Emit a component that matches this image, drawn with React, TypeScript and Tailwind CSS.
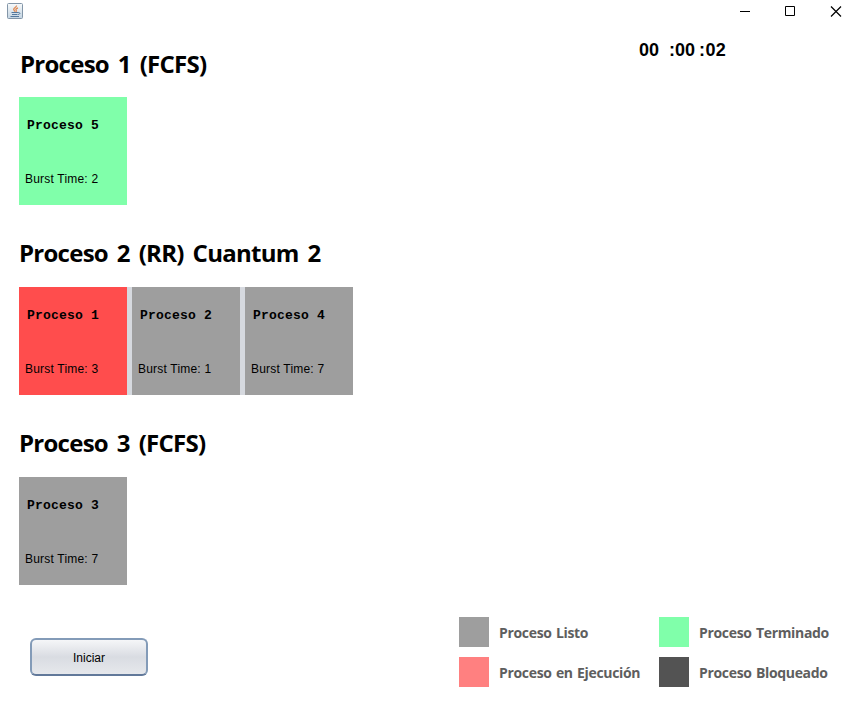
type Estado = "listo" | "terminado" | "ejecucion";

interface Proceso {
  id: number;
  burst: number;
  estado: Estado;
}

interface Cola {
  titulo: string;
  margen: string;
  procesos: Proceso[];
}

const colas: Cola[] = [
  { titulo: "Proceso 1 (FCFS)", margen: "pl-px leading-[34px]", procesos: [{ id: 5, burst: 2, estado: "terminado" }] },
  {
    titulo: "Proceso 2 (RR) Cuantum 2",
    margen: "leading-[32px]",
    procesos: [
      { id: 1, burst: 3, estado: "ejecucion" },
      { id: 2, burst: 1, estado: "listo" },
      { id: 4, burst: 7, estado: "listo" },
    ],
  },
  { titulo: "Proceso 3 (FCFS)", margen: "leading-[32px]", procesos: [{ id: 3, burst: 7, estado: "listo" }] },
];

const fondo: Record<Estado, string> = {
  listo: "bg-[#9e9e9e]",
  terminado: "bg-[#80ffaa]",
  ejecucion: "bg-[#ff4d4d]",
};

const leyenda = [
  { texto: "Proceso Listo", color: "bg-[#9e9e9e]" },
  { texto: "Proceso Terminado", color: "bg-[#80ffaa]" },
  { texto: "Proceso en Ejecución", color: "bg-[#ff8080]" },
  { texto: "Proceso Bloqueado", color: "bg-[#535353]" },
];

function JavaIcon() {
  return (
    <svg width="16" height="16" viewBox="0 0 16 16" fill="none">
      <defs>
        <linearGradient id="java" x1="0" y1="0" x2="0" y2="1">
          <stop offset="0" stopColor="#f8fafb" />
          <stop offset="1" stopColor="#c3d4e2" />
        </linearGradient>
      </defs>
      <rect x="0.5" y="0.5" width="15" height="15" rx="1" fill="url(#java)" stroke="#8396a8" />
      <path d="M9.500 2.500c.3 1.500-2.800 2.200-2.800 3.800 0 .9 1 1.400 1.100 2.500M11 5c-1.700.4-2.600 1.300-1.800 2.300.4.500.1 1-.3 1.500" stroke="#e08a54" strokeWidth="1.300" />
      <path d="M4.500 9.500h6.500M5 11.500h5.500M3.500 13.500h8.500M11 9.500c2.500-.2 2.500 1.800 0 2" stroke="#54789d" strokeWidth="1" />
    </svg>
  );
}

function TitleBar() {
  return (
    <header className="flex h-[22px] items-start justify-between pl-[7px]">
      <div className="pt-[3px]"><JavaIcon /></div>
      <div className="flex gap-[34px] pt-1.5 pr-[18px]">
        <svg width="11" height="11" viewBox="0 0 11 11"><path d="M0 5.500h10" stroke="#000" /></svg>
        <svg width="11" height="11" viewBox="0 0 11 11"><path d="M.5.500h9v9h-9z" fill="none" stroke="#000" /></svg>
        <svg width="11" height="11" viewBox="0 0 11 11" className="overflow-visible"><path d="M1 .500l10 10M11 .500l-10 10" stroke="#000" strokeWidth="1.200" /></svg>
      </div>
    </header>
  );
}

function Tarjeta({ id, burst, estado }: Proceso) {
  return (
    <article className={`flex h-[108px] w-[108px] flex-col justify-between pt-[21px] pb-[18px] text-black ${fondo[estado]}`}>
      <h3 className="pl-2 font-['Liberation_Mono',monospace] text-[13px] leading-4 font-bold tracking-[0.2px] whitespace-pre">Proceso {id}</h3>
      <p className="pl-1.5 font-['Liberation_Sans',sans-serif] text-xs leading-4 tracking-[0.2px] whitespace-pre">Burst Time: {burst}</p>
    </article>
  );
}

export default function App() {
  return (
    <div className="flex h-[704px] w-[859px] flex-col overflow-hidden bg-white text-black">
      <TitleBar />
      <main className="flex h-[563px] justify-between pl-[19px]">
        <div className="flex flex-col gap-[22px] pt-[25px]">
          {colas.map((cola) => (
            <section key={cola.titulo} className="flex h-[168px] shrink-0 flex-col items-start">
              <h2 className={`h-[50px] shrink-0 font-['Open_Sans',sans-serif] text-2xl font-bold tracking-[-0.74px] whitespace-nowrap [word-spacing:3.4px] ${cola.margen}`}>{cola.titulo}</h2>
              <div className="flex gap-[5px] bg-[#d6d9df]">
                {cola.procesos.map((p) => <Tarjeta key={p.id} {...p} />)}
              </div>
            </section>
          ))}
        </div>
        <div className="flex w-[220px] pt-[18px] font-['Liberation_Sans',sans-serif] text-lg leading-5 font-bold">
          <span className="w-[30px]">00</span>
          <span className="w-[30px]">:00</span>
          <span className="tracking-[0.4px]">:02</span>
        </div>
      </main>
      <footer className="flex justify-between pl-[30px]">
        <button className="mt-[53px] h-[38px] w-[118px] rounded-[6px] border-2 border-[#839bb8] border-b-[#62799a] bg-linear-to-b from-[#f5f6f8] via-[#d9dce2] to-[#e6e8ec] pt-0.5 font-['Liberation_Sans',sans-serif] text-xs">Iniciar</button>
        <div className="mt-8 grid w-[400px] grid-cols-[200px_200px] gap-y-2.5">
          {leyenda.map((item) => (
            <div key={item.texto} className="flex h-[30px] items-center gap-2.5">
              <span className={`h-[30px] w-[30px] ${item.color}`} />
              <span className="pt-0.5 font-['Open_Sans',sans-serif] text-sm font-bold tracking-[-0.33px] whitespace-nowrap text-[#5e5e5e] [word-spacing:1px]">{item.texto}</span>
            </div>
          ))}
        </div>
      </footer>
    </div>
  );
}
